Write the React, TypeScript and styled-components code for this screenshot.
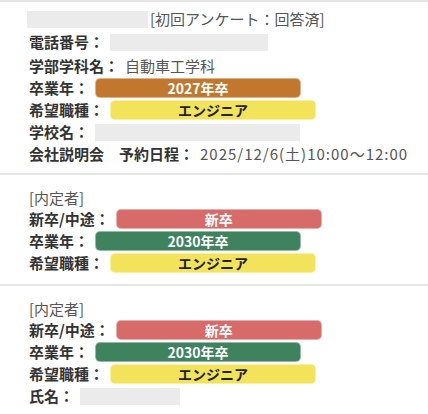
import styled, { createGlobalStyle } from "styled-components";

const GlobalStyle = createGlobalStyle`
  body {
    margin: 0;
    background: #fff;
    font-family: "Noto Sans CJK JP", "Noto Sans", sans-serif;
  }
`;

const List = styled.div`
  width: 428px;
  border-top: 2px solid #e6e6e6;
`;

const Card = styled.section`
  padding: 12px 0 10px 29px;
  border-bottom: 2px solid #e6e6e6;
  &:first-child {
    padding-top: 6px;
    padding-bottom: 8px;
  }
  &:last-child {
    border-bottom: none;
  }
`;

const Row = styled.div<{ $h?: number }>`
  display: flex;
  align-items: center;
  height: ${(p) => p.$h ?? 22}px;
  font-size: 15px;
  line-height: 22px;
  white-space: nowrap;
`;

const Label = styled.span`
  font-weight: bold;
  color: #333;
`;

const Value = styled.span<{ $spaced?: boolean }>`
  margin-left: 6px;
  color: #555;
  letter-spacing: ${(p) => (p.$spaced ? "1px" : "0")};
`;

const Note = styled.span<{ $gap?: number }>`
  margin-left: ${(p) => p.$gap ?? 0}px;
  color: #555;
`;

const Redact = styled.span<{ $w: number; $gap?: number }>`
  display: inline-block;
  width: ${(p) => p.$w}px;
  height: 17px;
  margin-left: ${(p) => p.$gap ?? 6}px;
  background: #ebebeb;
`;

const tones = {
  orange: { bg: "#c1782e", fg: "#fff" },
  yellow: { bg: "#f2e35a", fg: "#222" },
  red: { bg: "#d66b6a", fg: "#fff" },
  green: { bg: "#3e825e", fg: "#fff" },
};

const Badge = styled.span<{ $tone: keyof typeof tones }>`
  display: inline-block;
  box-sizing: border-box;
  width: 206px;
  height: 20px;
  margin-left: 6px;
  border-radius: 5px;
  border: 1px solid rgba(255, 255, 255, 0.45);
  background: ${(p) => tones[p.$tone].bg};
  color: ${(p) => tones[p.$tone].fg};
  font-size: 14px;
  font-weight: bold;
  line-height: 18px;
  text-align: center;
`;

const Offer = ({ withName }: { withName?: boolean }) => (
  <Card>
    <Row $h={21}>
      <Note>[内定者]</Note>
    </Row>
    <Row>
      <Label>新卒/中途：</Label>
      <Badge $tone="red">新卒</Badge>
    </Row>
    <Row>
      <Label>卒業年：</Label>
      <Badge $tone="green">2030年卒</Badge>
    </Row>
    <Row>
      <Label>希望職種：</Label>
      <Badge $tone="yellow">エンジニア</Badge>
    </Row>
    {withName && (
      <Row>
        <Label>氏名：</Label>
        <Redact $w={100} />
      </Row>
    )}
  </Card>
);

export default function App() {
  return (
    <>
      <GlobalStyle />
      <List>
        <Card>
          <Row>
            <Redact $w={121} $gap={-2} />
            <Note $gap={2}>[初回アンケート：回答済]</Note>
          </Row>
          <Row $h={24}>
            <Label>電話番号：</Label>
            <Redact $w={158} />
          </Row>
          <Row $h={23}>
            <Label>学部学科名：</Label>
            <Value>自動車工学科</Value>
          </Row>
          <Row>
            <Label>卒業年：</Label>
            <Badge $tone="orange">2027年卒</Badge>
          </Row>
          <Row>
            <Label>希望職種：</Label>
            <Badge $tone="yellow">エンジニア</Badge>
          </Row>
          <Row>
            <Label>学校名：</Label>
            <Redact $w={205} />
          </Row>
          <Row>
            <Label>会社説明会　予約日程：</Label>
            <Value $spaced>2025/12/6(土)10:00～12:00</Value>
          </Row>
        </Card>
        <Offer />
        <Offer withName />
      </List>
    </>
  );
}
